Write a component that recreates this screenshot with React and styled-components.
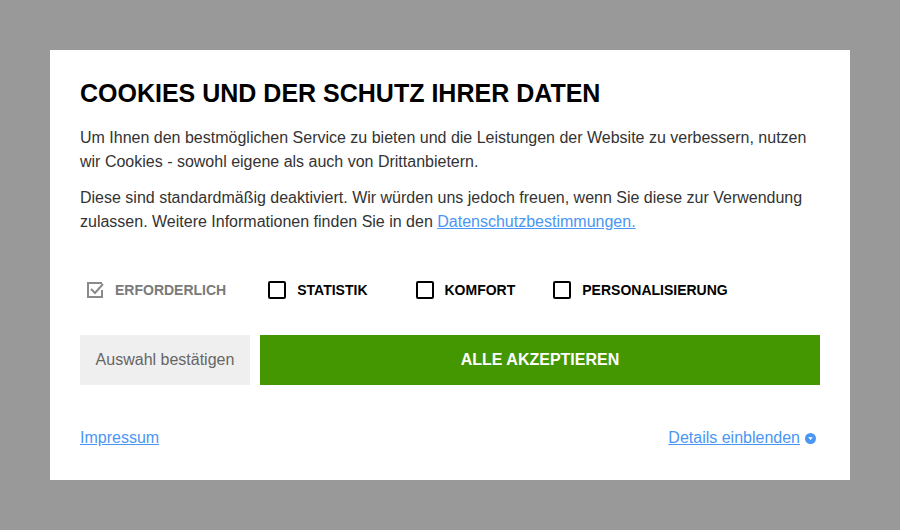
import styled, { createGlobalStyle } from "styled-components";

const GlobalStyle = createGlobalStyle`
  html, body {
    margin: 0;
    padding: 0;
    background: #999999;
    font-family: "Liberation Sans", Arial, sans-serif;
  }
`;

const Overlay = styled.div`
  width: 900px;
  height: 530px;
  display: flex;
  justify-content: center;
  padding-top: 50px;
  box-sizing: border-box;
`;

const Dialog = styled.div`
  width: 800px;
  height: 430px;
  background: #fff;
  padding: 28px 30px 0;
  box-sizing: border-box;
  display: flex;
  flex-direction: column;
`;

const Title = styled.h2`
  margin: 0 0 18px;
  font-size: 25px;
  line-height: 30px;
  font-weight: 700;
  color: #000;
`;

const Text = styled.p`
  margin: 0 0 12px;
  font-size: 16px;
  line-height: 24px;
  color: #333;
`;

const Link = styled.a`
  color: #4a96f4;
  text-decoration: underline;
  cursor: pointer;
`;

const Options = styled.div`
  display: flex;
  align-items: center;
  margin-top: 35px;
  padding-left: 6px;
`;

const Option = styled.label`
  display: flex;
  align-items: center;
  gap: 11px;
  margin-right: ${(p) => p.$gap}px;
  font-size: 14px;
  font-weight: 700;
  color: ${(p) => (p.$disabled ? "#7a7a7a" : "#000")};
`;

const Box = styled.span`
  width: 14px;
  height: 14px;
  border: 2px solid #000;
  border-radius: 2px;
  display: inline-block;
`;

const Buttons = styled.div`
  display: flex;
  gap: 10px;
  margin-top: 36px;
`;

const Button = styled.button`
  height: 50px;
  border: none;
  font-family: inherit;
  font-size: 16px;
  cursor: pointer;
`;

const SecondaryButton = styled(Button)`
  width: 170px;
  background: #efefef;
  color: #666;
`;

const PrimaryButton = styled(Button)`
  flex: 1;
  background: #449700;
  color: #fff;
  font-weight: 700;
`;

const Footer = styled.div`
  display: flex;
  justify-content: space-between;
  align-items: center;
  margin-top: 44px;
  padding-right: 4px;
  font-size: 16px;
`;

const DetailsLink = styled(Link)`
  display: flex;
  align-items: center;
  gap: 5px;
  text-decoration: none;
`;

const Underlined = styled.span`
  text-decoration: underline;
`;

function CheckIcon() {
  return (
    <svg width="18" height="18" viewBox="0 0 18 18" fill="none">
      <path d="M16 2H2v14h14V9" stroke="#8a8a8a" strokeWidth="2" />
      <path d="M5 8l4 4 8-9" stroke="#8a8a8a" strokeWidth="2" />
    </svg>
  );
}

function Caret() {
  return (
    <svg width="11" height="11" viewBox="0 0 11 11">
      <circle cx="5.5" cy="5.5" r="5.5" fill="#4a96f4" />
      <path d="M3.2 4.3h4.6L5.5 6.9z" fill="#fff" />
    </svg>
  );
}

const options = [
  { label: "STATISTIK", gap: 48 },
  { label: "KOMFORT", gap: 38 },
  { label: "PERSONALISIERUNG", gap: 0 },
];

export default function App() {
  return (
    <>
      <GlobalStyle />
      <Overlay>
        <Dialog>
          <Title>COOKIES UND DER SCHUTZ IHRER DATEN</Title>
          <Text>
            Um Ihnen den bestmöglichen Service zu bieten und die Leistungen der
            Website zu verbessern, nutzen wir Cookies - sowohl eigene als auch
            von Drittanbietern.
          </Text>
          <Text>
            Diese sind standardmäßig deaktiviert. Wir würden uns jedoch freuen,
            wenn Sie diese zur Verwendung zulassen. Weitere Informationen finden
            Sie in den <Link>Datenschutzbestimmungen.</Link>
          </Text>
          <Options>
            <Option $disabled $gap={42}>
              <CheckIcon />
              ERFORDERLICH
            </Option>
            {options.map((o) => (
              <Option key={o.label} $gap={o.gap}>
                <Box />
                {o.label}
              </Option>
            ))}
          </Options>
          <Buttons>
            <SecondaryButton>Auswahl bestätigen</SecondaryButton>
            <PrimaryButton>ALLE AKZEPTIEREN</PrimaryButton>
          </Buttons>
          <Footer>
            <Link>Impressum</Link>
            <DetailsLink as="span">
              <Underlined>Details einblenden</Underlined>
              <Caret />
            </DetailsLink>
          </Footer>
        </Dialog>
      </Overlay>
    </>
  );
}
